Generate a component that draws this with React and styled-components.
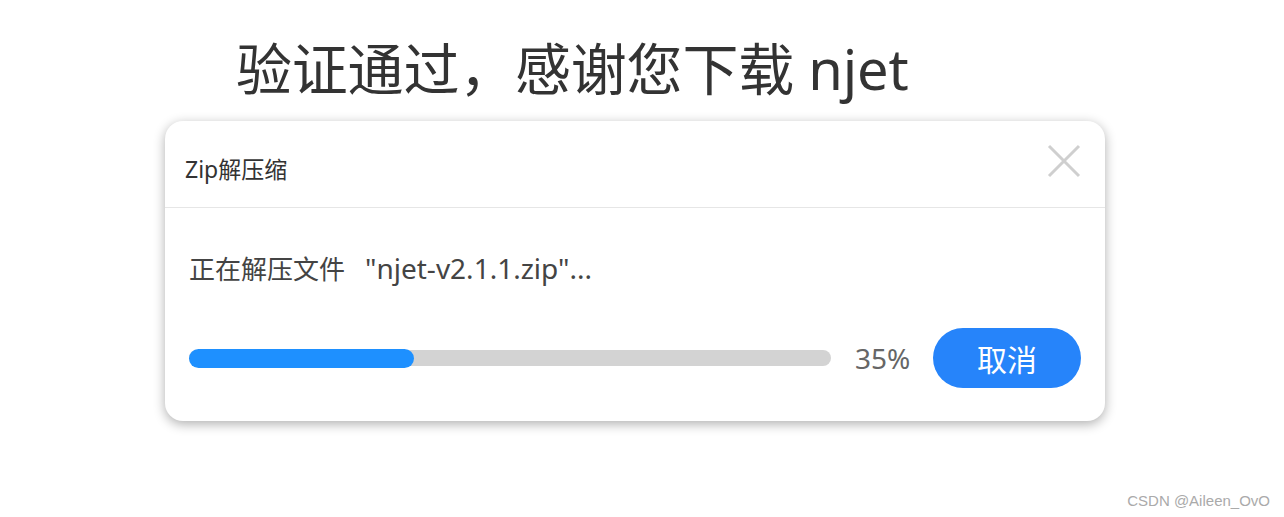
import React from 'react'
import styled, { createGlobalStyle } from 'styled-components'

const GlobalStyle = createGlobalStyle`
    html, body {
        margin: 0;
        padding: 0;
        background: #fff;
        font-family: "Noto Sans", "Noto Sans CJK SC", sans-serif;
    }
`;

const Page = styled.div`
    position: relative;
    width: 1284px;
    height: 517px;
    padding-top: 30px;
    box-sizing: border-box;
`;

const Heading = styled.h1`
    margin: 0 0 0 236px;
    font-size: 56px;
    font-weight: 400;
    line-height: 76px;
    color: #333;
    letter-spacing: -0.2px;
    font-family: "Noto Sans", "Noto Sans CJK SC", sans-serif;
`;

const Dialog = styled.div`
    margin: 15px 0 0 165px;
    width: 940px;
    height: 300px;
    background: #fff;
    border-radius: 18px;
    box-shadow: 0 3px 12px rgba(0, 0, 0, 0.32);
    display: flex;
    flex-direction: column;
    overflow: hidden;
`;

const Header = styled.div`
    height: 87px;
    border-bottom: 1px solid #e6e6e6;
    display: flex;
    align-items: center;
    justify-content: space-between;
    padding: 0 24px 0 20px;
    box-sizing: border-box;
`;

const Title = styled.span`
    font-size: 23px;
    color: #333;
    margin-top: 8px;
`;

const CloseBtn = styled.button`
    border: none;
    background: none;
    padding: 0;
    width: 34px;
    height: 34px;
    margin-top: -7px;
    cursor: pointer;
    svg { display: block; }
`;

const Body = styled.div`
    flex: 1;
    padding: 39px 24px 0 24px;
    display: flex;
    flex-direction: column;
`;

const Message = styled.div`
    font-size: 26px;
    color: #444;
    line-height: 42px;
`;

const FileName = styled.span`
    font-size: 28px;
    margin-left: 20px;
`;

const ProgressRow = styled.div`
    margin-top: 38px;
    display: flex;
    align-items: center;
`;

const Track = styled.div`
    width: 642px;
    height: 16px;
    border-radius: 8px;
    background: #d3d3d3;
    display: flex;
    align-items: center;
`;

const Fill = styled.div`
    height: 19px;
    border-radius: 10px;
    background: #1e90ff;
`;

const Percent = styled.span`
    margin-left: 24px;
    width: 78px;
    font-size: 28px;
    color: #666;
`;

const CancelBtn = styled.button`
    width: 148px;
    height: 60px;
    border: none;
    border-radius: 30px;
    background: #2684fa;
    color: #fff;
    font-size: 30px;
    font-family: "Noto Sans CJK SC", sans-serif;
    cursor: pointer;
`;

const Watermark = styled.span`
    position: absolute;
    right: 14px;
    bottom: 8px;
    font-size: 15px;
    color: #aaa;
    font-family: "Liberation Sans", Arial, sans-serif;
`;

function App() {
    const progress = 35
    return (
        <Page>
            <GlobalStyle />
            <Heading>验证通过，感谢您下载 njet</Heading>
            <Dialog>
                <Header>
                    <Title>Zip解压缩</Title>
                    <CloseBtn aria-label="close">
                        <svg width="34" height="34" viewBox="0 0 34 34">
                            <path d="M2 2 L32 32 M32 2 L2 32" stroke="#cfcfcf" strokeWidth="3" fill="none" />
                        </svg>
                    </CloseBtn>
                </Header>
                <Body>
                    <Message>正在解压文件<FileName>"njet-v2.1.1.zip"...</FileName></Message>
                    <ProgressRow>
                        <Track>
                            <Fill style={{ width: `${progress}%` }} />
                        </Track>
                        <Percent>{progress}%</Percent>
                        <CancelBtn>取消</CancelBtn>
                    </ProgressRow>
                </Body>
            </Dialog>
            <Watermark>CSDN @Aileen_OvO</Watermark>
        </Page>
    )
}

export default App
